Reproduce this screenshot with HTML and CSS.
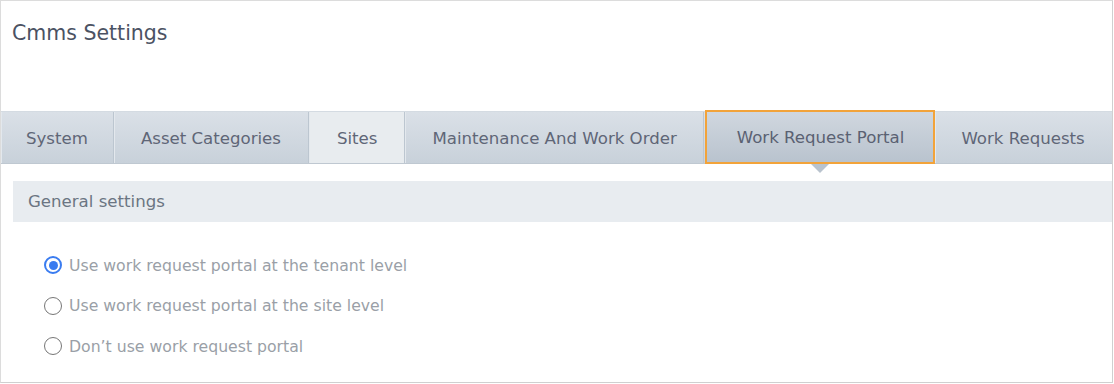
FILE: index.html
```html
<!DOCTYPE html>
<html lang="en">
<head>
    <meta charset="UTF-8">
    <title>Cmms Settings</title>
    <link rel="stylesheet" href="styles.css">
</head>
<body>
<div class="page">
    <div class="header">
        <h1>Cmms Settings</h1>
    </div>

    <div class="tabs">
        <a class="tab tab-system">System</a>
        <a class="tab tab-wide">Asset Categories</a>
        <a class="tab tab-light">Sites</a>
        <a class="tab tab-maint">Maintenance And Work Order</a>
        <a class="tab tab-active">Work Request Portal</a>
        <a class="tab tab-last">Work Requests</a>
    </div>

    <div class="section">
        <div class="section-title">General settings</div>
        <div class="options">
            <label class="option"><span class="radio checked"></span>Use work request portal at the tenant level</label>
            <label class="option"><span class="radio"></span>Use work request portal at the site level</label>
            <label class="option"><span class="radio"></span>Don’t use work request portal</label>
        </div>
    </div>
</div>
</body>
</html>
```

FILE: styles.css
```css
body {
    margin: 0;
    padding: 0;
    font-family: "DejaVu Sans", Verdana, sans-serif;
    background: #fff;
}
.page {
    width: 1113px;
    height: 383px;
    box-sizing: border-box;
    border: 1px solid #dcdcdc;
    border-right-color: #d0d0d0;
    border-bottom-color: #d0d0d0;
    overflow: hidden;
}
.header {
    height: 110px;
    padding-left: 11px;
}
.header h1 {
    margin: 0;
    padding-top: 19px;
    font-size: 20.5px;
    line-height: 26px;
    font-weight: normal;
    color: #4b5263;
}

/* вкладки */
.tabs {
    display: flex;
    height: 51px;
    border-top: 1px solid #d4dbe2;
    border-bottom: 1px solid #bfc8d1;
    background: linear-gradient(#dbe1e7, #c9d2db);
}
.tab {
    position: relative;
    flex: none;
    display: flex;
    align-items: center;
    padding: 1px 26px 0 26px;
    font-size: 16.6px;
    color: #5f6677;
    border-right: 1px solid #bcc6d0;
    box-shadow: inset 1px 0 0 #e3e8ed;
    background: linear-gradient(#dae0e7, #c8d1da);
}
.tab-system {
    padding: 1px 25px 0 25px;
}
.tab-wide {
    padding: 1px 27px 0 27px;
}
.tab-maint {
    padding: 1px 26px 0 27px;
}
.tab-last {
    padding: 1px 27px 0 26px;
}
.tab-light {
    background: #e8ecef;
    padding: 1px 27px 0 28px;
}
.tab-active {
    background: linear-gradient(#d0d7df, #b9c3ce);
    border: 2px solid #f2a33a;
    margin-top: -2px;
    margin-bottom: -1px;
    margin-left: 1px;
    padding: 1px 29px 0 30px;
    box-shadow: none;
    color: #5a6172;
}
.tab-active::after {
    content: "";
    position: absolute;
    left: 50%;
    bottom: -11px;
    margin-left: -9px;
    border-left: 9px solid transparent;
    border-right: 9px solid transparent;
    border-top: 9px solid #b9c3ce;
}

/* секция */
.section {
    padding-left: 12px;
    margin-top: 17px;
}
.section-title {
    height: 41px;
    line-height: 41px;
    padding-left: 15px;
    background: #e8ecf0;
    font-size: 16.6px;
    color: #6b7582;
}
.options {
    padding: 23px 0 0 31px;
}
.option {
    display: flex;
    align-items: center;
    height: 40.5px;
    font-size: 15.7px;
    color: #9a9fa7;
}
.radio {
    box-sizing: border-box;
    width: 18px;
    height: 18px;
    margin-right: 7px;
    border: 1.5px solid #767676;
    border-radius: 50%;
    display: flex;
    align-items: center;
    justify-content: center;
}
.radio.checked {
    border: 2px solid #3a7cf0;
}
.radio.checked::before {
    content: "";
    width: 9px;
    height: 9px;
    border-radius: 50%;
    background: #3a7cf0;
}
```
